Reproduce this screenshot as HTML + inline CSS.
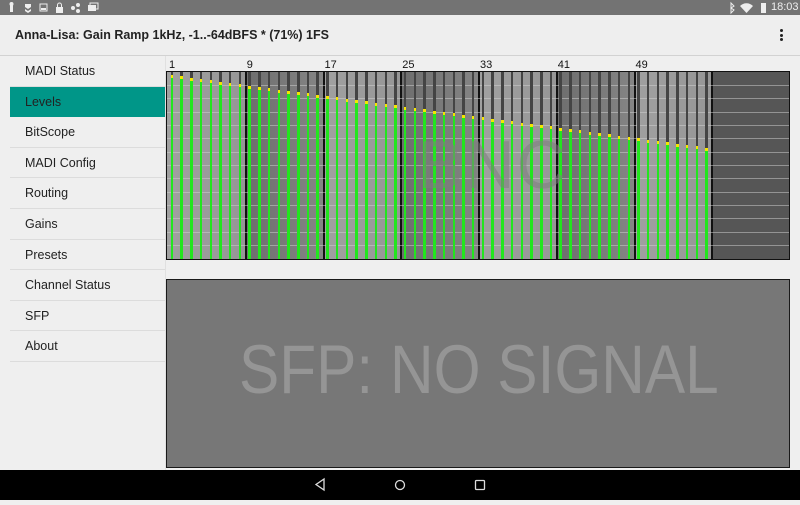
<!DOCTYPE html>
<html><head><meta charset="utf-8"><style>
*{margin:0;padding:0;box-sizing:border-box}
body{width:800px;height:500px;position:relative;overflow:hidden;background:#efefef;font-family:"Liberation Sans",sans-serif}
.abs{position:absolute}
#sb{left:0;top:0;width:800px;height:15px;background:#737373}
#tb{left:0;top:15px;width:800px;height:41px;background:#eeeeee;border-bottom:1px solid #d2d2d2}
.item{position:absolute;left:10px;width:155px;height:30.6px;border-bottom:1px solid #dcdcdc;font-size:12.5px;color:#222;padding-left:15px;line-height:30px}
#nav{left:0;top:470px;width:800px;height:30px;background:#000}
</style></head><body>
<div id="sb" class="abs">
 <svg class="abs" style="left:0;top:0" width="110" height="15" fill="#eee">
  <rect x="10" y="5" width="3" height="7"/><circle cx="11.5" cy="4" r="2"/>
  <path d="M25 4h6v3l-3 2-3-2z M25 9l3 2 3-2v2l-3 2-3-2z"/>
  <rect x="40" y="4" width="7" height="7" fill="none" stroke="#eee"/><rect x="41" y="8" width="5" height="2"/>
  <rect x="56" y="7" width="7" height="6"/><path d="M57.5 7V5a2 2 0 0 1 4 0v2" fill="none" stroke="#eee"/>
  <circle cx="73" cy="8" r="2"/><circle cx="78" cy="5" r="2"/><circle cx="78" cy="11" r="2"/>
  <rect x="88" y="5" width="8" height="6"/><rect x="90" y="3" width="8" height="6" fill="none" stroke="#eee"/>
 </svg>
 <svg class="abs" style="left:725px;top:0" width="45" height="15" fill="#eee">
  <path d="M6 3l3 3-3 2 3 2-3 3V3z" fill="none" stroke="#eee"/>
  <path d="M15 6a9 9 0 0 1 13 0l-6.5 7z"/>
  <rect x="36" y="3" width="5" height="10"/>
 </svg>
 <div class="abs" style="left:771px;top:1px;font-size:11px;color:#eee">18:03</div>
</div>
<div id="tb" class="abs">
 <div class="abs" style="left:15px;top:13px;font-size:12.5px;font-weight:bold;color:#222">Anna-Lisa: Gain Ramp 1kHz, -1..-64dBFS * (71%) 1FS</div>
 <div class="abs" style="left:780px;top:14px;width:3px">
  <div style="width:3px;height:3px;background:#222;border-radius:2px;margin-bottom:1.5px"></div>
  <div style="width:3px;height:3px;background:#222;border-radius:2px;margin-bottom:1.5px"></div>
  <div style="width:3px;height:3px;background:#222;border-radius:2px"></div>
 </div>
</div>
<div class="item" style="top:56px">MADI Status</div>
<div class="item" style="top:86.6px;background:#009688;border-bottom:none">Levels</div>
<div class="item" style="top:117.2px">BitScope</div>
<div class="item" style="top:147.8px">MADI Config</div>
<div class="item" style="top:178.4px">Routing</div>
<div class="item" style="top:209px">Gains</div>
<div class="item" style="top:239.6px">Presets</div>
<div class="item" style="top:270.2px">Channel Status</div>
<div class="item" style="top:300.8px">SFP</div>
<div class="item" style="top:331.4px">About</div>
<div class="abs" style="left:165px;top:56px;width:1px;height:414px;background:#e0e0e0"></div>

<div id="meter" class="abs" style="left:166px;top:71px;width:624px;height:189px;border:1px solid #111;background:#565656"></div>
<div id="labels"></div>
<div class="abs" style="left:418px;top:126px;font-size:68px;color:rgba(125,125,125,0.55);letter-spacing:2px">BNC</div>

<div class="abs" style="left:166px;top:279px;width:624px;height:189px;border:1px solid #1a1a1a;background:#777"></div>
<div class="abs" style="left:239px;top:330px;font-size:69px;color:#959595;transform:scaleX(0.875);transform-origin:left top;white-space:nowrap">SFP: NO SIGNAL</div>

<div id="nav" class="abs">
 <svg width="800" height="30" fill="none" stroke="#ddd" stroke-width="1.3">
  <path d="M324 479l-8 5.5 8 5.5z" transform="translate(0,-470)"/>
  <circle cx="400" cy="15" r="4.5"/>
  <rect x="475.5" y="10.5" width="9" height="9" rx="1"/>
 </svg>
</div>
<script>
var m=document.getElementById('meter');var h='';
var gw=77.75;
for(var g=0;g<8;g++){
 var bg=g==7?'#565656':(g%2==0?'linear-gradient(90deg,#a0a0a0,#969696)':'linear-gradient(90deg,#6e6e6e,#858585)');
 h+='<div style="position:absolute;left:'+(g*gw)+'px;top:0;width:'+gw+'px;height:187px;background:'+bg+';border-left:'+(g?'2px solid #111':'none')+'"></div>';
}
for(var k=1;k<14;k++)h+='<div style="position:absolute;left:0;top:'+(k*13.36-0.5)+'px;width:622px;height:1px;background:rgba(210,210,210,0.5)"></div>';
for(var i=0;i<56;i++){
 var x=(i+0.5)*9.72-1.2, lv=3+i*1.32;
 h+='<div style="position:absolute;left:'+x+'px;top:0;width:2.5px;height:'+lv+'px;background:#444"></div>';
 h+='<div style="position:absolute;left:'+x+'px;top:'+lv+'px;width:2.5px;height:'+(187-lv)+'px;background:#22e61e"></div>';
 h+='<div style="position:absolute;left:'+x+'px;top:'+lv+'px;width:2.5px;height:3px;background:#f5e600"></div>';
}
m.innerHTML=h;
var L='';var n=[1,9,17,25,33,41,49];
for(var j=0;j<7;j++)L+='<div class="abs" style="left:'+(169+j*gw)+'px;top:59px;font-size:11px;color:#111">'+n[j]+'</div>';
document.getElementById('labels').innerHTML=L;
</script>
</body></html>
